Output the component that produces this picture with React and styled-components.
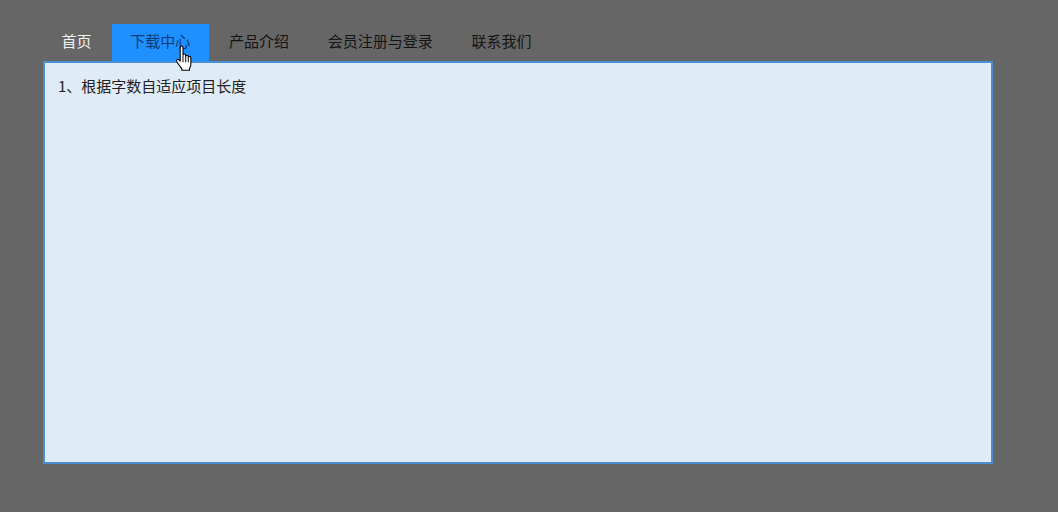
import React from "react";
import styled, { createGlobalStyle } from "styled-components";

const tabs = ["首页", "下载中心", "产品介绍", "会员注册与登录", "联系我们"];

function HandCursor() {
  return (
    <Cursor viewBox="0 0 17 25" aria-hidden="true">
      <path
        d="M4.5 2.2c0-1.6 2.6-1.6 2.6 0v7.3c0-1.5 2.5-1.5 2.5 0v1c0-1.4 2.4-1.4 2.4 0v1c0-1.3 2.4-1.3 2.4.2v5.8c0 2.2-.8 3.2-1.3 4.5v1.4H6v-1.4c-1-1.6-3-3.6-4.6-6.6-.8-1.6.9-2.8 2.1-1.6l1 1.2z"
        fill="#fff"
        stroke="#000"
        strokeWidth="1"
        strokeLinejoin="round"
      />
      <path d="M7.1 10v6M9.6 10.5V16M12 11.5V16" stroke="#000" strokeWidth="0.9" fill="none" />
    </Cursor>
  );
}

export default function App() {
  return (
    <>
      <GlobalStyle />
      <Page>
        <TabBar>
          {tabs.map((tab, i) => (
            <Tab key={tab} $active={i === 1} $light={i === 0}>
              {tab}
              {i === 1 && <HandCursor />}
            </Tab>
          ))}
        </TabBar>
        <Panel>
          <Line>1、根据字数自适应项目长度</Line>
        </Panel>
      </Page>
    </>
  );
}

const GlobalStyle = createGlobalStyle`
  html, body {
    margin: 0;
    padding: 0;
    background: #666666;
  }
`;

const Page = styled.div`
  width: 1058px;
  height: 512px;
  box-sizing: border-box;
  padding: 24px 0 0 43px;
  overflow: hidden;
  font-family: "Noto Sans CJK SC", "Liberation Sans", sans-serif;
  font-size: 15px;
`;

const TabBar = styled.div`
  display: flex;
  gap: 1.75px;
  height: 37px;
`;

const Tab = styled.div`
  position: relative;
  padding: 0 18.5px;
  line-height: 34px;
  color: ${(p) => (p.$light ? "#f2f2f2" : p.$active ? "#0b3a78" : "#141414")};
  background: ${(p) => (p.$active ? "#1e90ff" : "transparent")};
`;

const Cursor = styled.svg`
  position: absolute;
  left: 62px;
  top: 21px;
  width: 21px;
  height: 27px;
`;

const Panel = styled.div`
  width: 950px;
  height: 403px;
  box-sizing: border-box;
  background: #e0ebf8;
  border: 2px solid #4a8fd4;
  padding: 12px 13px;
`;

const Line = styled.div`
  color: #222222;
  line-height: 22px;
`;
